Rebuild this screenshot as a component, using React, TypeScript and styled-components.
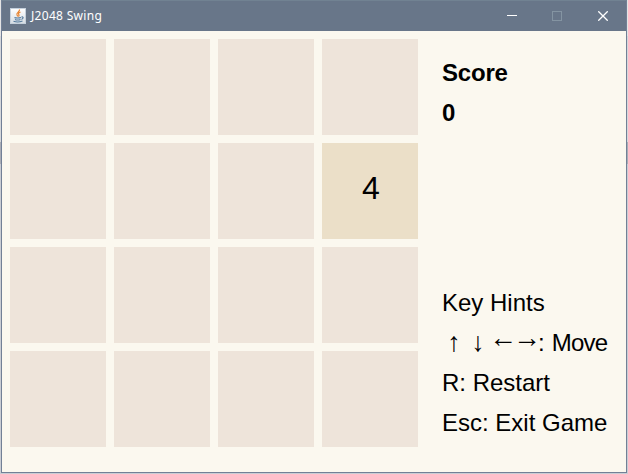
import React from "react";
import styled, { createGlobalStyle } from "styled-components";

const GlobalStyle = createGlobalStyle`
  * { box-sizing: border-box; }
  body { margin: 0; overflow: hidden; background: #c3c7cd; }
`;

const Desktop = styled.div`
  width: 628px;
  height: 474px;
  padding: 0 1px 1px;
  background: linear-gradient(#e4e4e4 0 36px, #d5d8db 36px 142px, #a9adb6 142px 164px, #c9cdd4 164px);
`;

const Window = styled.main`
  width: 626px;
  height: 473px;
  display: flex;
  flex-direction: column;
  background: #fbf8ef;
  border: 1px solid #728096;
  border-top-color: #718292;
`;

const TitleBar = styled.header`
  height: 30px;
  flex: none;
  display: flex;
  align-items: center;
  background: #687689;
  color: #fff;
  padding-left: 8px;
`;

const Title = styled.h1`
  margin: 0 auto 0 5px;
  font: 400 12px/16px "Noto Sans", "Open Sans", sans-serif;
  letter-spacing: 0.3px;
`;

const ControlButton = styled.button<{ $muted?: boolean }>`
  width: 46px;
  height: 30px;
  padding: 0;
  border: 0;
  display: grid;
  place-items: center;
  background: none;
  color: ${(p) => (p.$muted ? "#8494a2" : "#fff")};
`;

const MinimizeButton = styled(ControlButton)`
  padding: 0 0 2px 2px;
`;

const Content = styled.div`
  display: flex;
  flex: 1;
  padding: 8px;
`;

const Board = styled.section`
  display: grid;
  grid-template-columns: repeat(4, 96px);
  grid-template-rows: repeat(4, 96px);
  gap: 8px;
`;

const Tile = styled.div<{ $filled: boolean }>`
  display: grid;
  place-items: center;
  padding: 0 0 6px 2px;
  background: ${(p) => (p.$filled ? "#ebdfc8" : "#eee4da")};
  color: #000;
  font: 400 32px/36px "Liberation Sans", Arial, sans-serif;
`;

const Sidebar = styled.aside`
  height: 408px;
  margin-left: 24px;
  padding: 14px 0 4px;
  display: flex;
  flex-direction: column;
  justify-content: space-between;
  color: #000;
  font: 400 24px/40px "Liberation Sans", Arial, sans-serif;
  white-space: nowrap;
`;

const Score = styled.div`
  font-weight: 700;
  letter-spacing: -0.2px;
`;

const Hints = styled.div``;

const Line = styled.div`
  height: 40px;
`;

const ArrowLine = styled(Line)`
  display: flex;
`;

const Arrow = styled.span`
  flex: none;
  width: 24px;
  text-align: center;
  font-size: 27px;
  line-height: 38px;
`;

const SideArrows = styled.span`
  flex: none;
  width: 48px;
  font-size: 28px;
  line-height: 30px;
  letter-spacing: -4px;
  text-indent: -1px;
`;

const MoveLabel = styled.span`
  letter-spacing: -0.8px;
  word-spacing: 2px;
`;

const tiles = [0, 0, 0, 0, 0, 0, 0, 4, 0, 0, 0, 0, 0, 0, 0, 0];

function JavaIcon() {
  return (
    <svg width="16" height="16" viewBox="0 0 16 16" fill="none">
      <defs>
        <linearGradient id="plate" x1="0" y1="0" x2="0" y2="1">
          <stop offset="0" stopColor="#fff" />
          <stop offset="1" stopColor="#d5dce3" />
        </linearGradient>
      </defs>
      <rect x=".5" y=".5" width="15" height="15" fill="url(#plate)" stroke="#c5d0dc" />
      <path d="M9.5 1.5C10 4 6 4.5 7 7l1 1.5M10.5 4C8.5 5 8 5.5 9 7c.3.7 0 1-.5 1.5" stroke="#e88430" strokeWidth="1.2" />
      <path d="M4.5 9.5c1 .8 5 .7 6.5 0M5 11.4c1.5.7 4 .6 5.5 0M3.5 13.3c2.5.8 6.5.7 9-.3M11.5 9c2-.7 2.4 1.4 0 2.4" stroke="#52799c" strokeWidth="1.1" />
    </svg>
  );
}

export default function App() {
  return (
    <Desktop>
      <GlobalStyle />
      <Window>
        <TitleBar>
          <JavaIcon />
          <Title>J2048 Swing</Title>
          <MinimizeButton aria-label="Minimize">
            <svg width="10" height="10" shapeRendering="crispEdges"><path d="M0 5.5h10" stroke="currentColor" /></svg>
          </MinimizeButton>
          <ControlButton $muted aria-label="Maximize">
            <svg width="10" height="10" fill="none" shapeRendering="crispEdges"><path d="M.5.5h9v9h-9z" stroke="currentColor" /></svg>
          </ControlButton>
          <ControlButton aria-label="Close">
            <svg width="10" height="10"><path d="M.3.3l9.4 9.4M9.7.3L.3 9.7" stroke="currentColor" strokeWidth="1.3" /></svg>
          </ControlButton>
        </TitleBar>
        <Content>
          <Board>
            {tiles.map((value, i) => (
              <Tile key={i} $filled={value > 0}>{value || ""}</Tile>
            ))}
          </Board>
          <Sidebar>
            <Score>
              <Line>Score</Line>
              <Line>0</Line>
            </Score>
            <Hints>
              <Line>Key Hints</Line>
              <ArrowLine>
                <Arrow>↑</Arrow>
                <Arrow>↓</Arrow>
                <SideArrows>←→</SideArrows>
                <MoveLabel>: Move</MoveLabel>
              </ArrowLine>
              <Line>R: Restart</Line>
              <Line>Esc: Exit Game</Line>
            </Hints>
          </Sidebar>
        </Content>
      </Window>
    </Desktop>
  );
}
